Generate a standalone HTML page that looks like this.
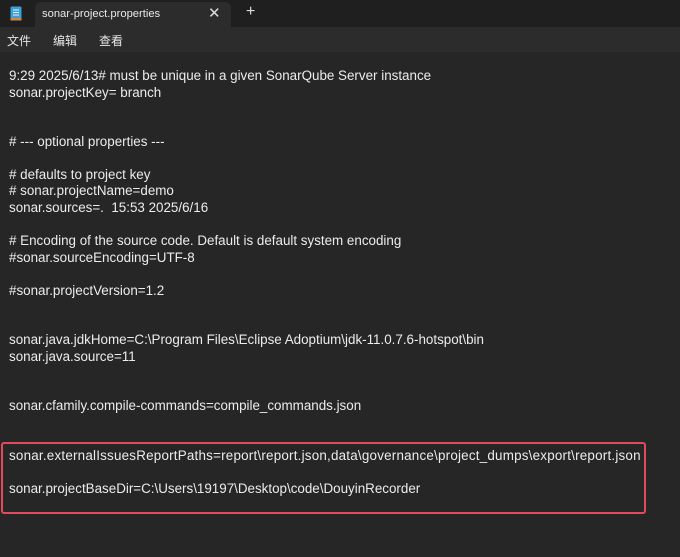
<!DOCTYPE html>
<html><head><meta charset="utf-8"><style>
*{margin:0;padding:0;box-sizing:border-box}
body{width:680px;height:557px;background:#262626;position:relative;overflow:hidden;font-family:"Segoe UI","Liberation Sans","Noto Sans CJK SC",sans-serif;color:#e6e6e6}
.title{position:absolute;left:0;top:0;width:680px;height:27px;background:#1f1f1f}
.tab{position:absolute;left:35px;top:2px;width:196px;height:25px;background:#2c2c2c;border-radius:6px 6px 0 0}
.tab span{position:absolute;left:7px;top:6px;font-size:11.2px;color:#e8e8e8}
.x{position:absolute;left:173px;top:2px;font-size:15px;color:#ddd}
.plus{position:absolute;left:246px;top:3px;font-size:16px;color:#ddd}
.menu{position:absolute;left:0;top:27px;width:680px;height:25px;background:#2c2c2c;font-size:12px}
.menu span{position:absolute;top:5px}
.l{position:absolute;left:9px;font-size:13.4px;white-space:pre;line-height:16px;color:#ececec}
.box{position:absolute;left:1px;top:442px;width:645px;height:72px;border:2px solid #e04a5c;border-radius:3px}
</style></head><body>
<div class="title">
<svg style="position:absolute;left:10px;top:6px" width="12" height="15" viewBox="0 0 12 15"><rect x="0.5" y="0.5" width="11" height="14" rx="1.5" fill="#3aa0d6"/><rect x="0.5" y="12" width="11" height="2.5" fill="#c98a3a"/><path d="M3 4h6M3 6.5h6M3 9h6" stroke="#e8f4fb" stroke-width="1"/></svg>
<div class="tab"><span>sonar-project.properties</span><div class="x">✕</div></div>
<div class="plus">+</div>
</div>
<div class="menu"><span style="left:7px">文件</span><span style="left:53px">编辑</span><span style="left:99px">查看</span></div>
<div class="l" style="top:68px">9:29 2025/6/13# must be unique in a given SonarQube Server instance</div>
<div class="l" style="top:85px">sonar.projectKey= branch</div>
<div class="l" style="top:134px"># --- optional properties ---</div>
<div class="l" style="top:167px"># defaults to project key</div>
<div class="l" style="top:183px"># sonar.projectName=demo</div>
<div class="l" style="top:200px">sonar.sources=.  15:53 2025/6/16</div>
<div class="l" style="top:233px"># Encoding of the source code. Default is default system encoding</div>
<div class="l" style="top:250px">#sonar.sourceEncoding=UTF-8</div>
<div class="l" style="top:283px">#sonar.projectVersion=1.2</div>
<div class="l" style="top:332px">sonar.java.jdkHome=C:\Program Files\Eclipse Adoptium\jdk-11.0.7.6-hotspot\bin</div>
<div class="l" style="top:349px">sonar.java.source=11</div>
<div class="l" style="top:398px">sonar.cfamily.compile-commands=compile_commands.json</div>
<div class="l" style="top:448px;letter-spacing:0.22px">sonar.externalIssuesReportPaths=report\report.json,data\governance\project_dumps\export\report.json</div>
<div class="l" style="top:481px">sonar.projectBaseDir=C:\Users\19197\Desktop\code\DouyinRecorder</div>
<div class="box"></div>
</body></html>
